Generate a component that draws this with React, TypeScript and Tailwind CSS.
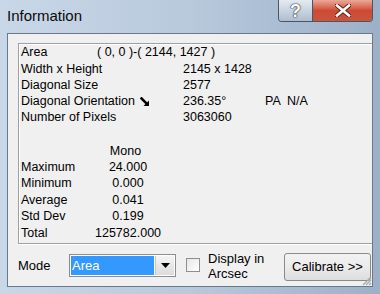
const rows = [
  { label: "Width x Height", value: "2145 x 1428" },
  { label: "Diagonal Size", value: "2577" },
];

const stats = [
  { label: "Maximum", value: "24.000" },
  { label: "Minimum", value: "0.000" },
  { label: "Average", value: "0.041" },
  { label: "Std Dev", value: "0.199" },
  { label: "Total", value: "125782.000" },
];

const Arrow = () => (
  <svg width="10" height="10" viewBox="0 0 10 10" className="ml-[5px] mt-[1px]">
    <path d="M1.5 1.5 L6 6" stroke="#000" strokeWidth="2.6" strokeLinecap="square" />
    <polygon points="9,3.5 9,9 3.5,9" fill="#000" />
  </svg>
);

const App = () => {
  return (
    <div className="w-[380px] h-[294px] overflow-hidden flex flex-col px-[7px] bg-gradient-to-r from-[#c9d8e8] via-[#b8c9dc] to-[#9cb0c8] font-['Liberation_Sans',Arial,sans-serif] text-black">
      {/* title bar */}
      <div className="h-[33px] flex items-start shrink-0">
        <div className="mt-[7px] text-[15px] leading-[18px] text-[#0b0b0b]">Information</div>
        <div className="ml-auto flex h-[22px] border border-t-0 border-[#4a5565] rounded-b-[4px] overflow-hidden">
          <div className="w-[34px] flex items-center justify-center bg-gradient-to-b from-[#e4eaf1] via-[#c9d4e0] to-[#aebdcf] border-r border-[#4a5565]">
            <span className="text-[18px] leading-[18px] font-bold text-white [text-shadow:0_0_1px_#333,0_0_1px_#333,0_0_2px_#555]">?</span>
          </div>
          <div className="w-[59px] flex items-center justify-center bg-gradient-to-b from-[#e9a999] via-[#cf4a32] to-[#c8553d]">
            <svg width="16" height="13" viewBox="0 0 16 13">
              <path d="M2 1.5 L14 11.5 M14 1.5 L2 11.5" stroke="#5a1a12" strokeWidth="4.4" strokeLinecap="square" />
              <path d="M2 1.5 L14 11.5 M14 1.5 L2 11.5" stroke="#fff" strokeWidth="2.6" strokeLinecap="square" />
            </svg>
          </div>
        </div>
      </div>

      {/* client area */}
      <div className="relative w-[366px] h-[254px] shrink-0 border border-[#6b7888] bg-[#f0f0f0] overflow-hidden">
        <div className="ml-[10px] mt-[9px] w-[360px] h-[201px] border-l border-t border-b border-[#a0a0a0] shadow-[inset_1px_1px_0_#fff,0_1px_0_#fff] pl-[2px] text-[12.5px] leading-[16px]">
          <div className="flex h-[17px]">
            <span className="w-[76px]">Area</span>
            <span className="whitespace-pre">( 0, 0 )-( 2144, 1427 )</span>
          </div>
          {rows.map((r) => (
            <div key={r.label} className="flex h-[16px]">
              <span className="w-[162px]">{r.label}</span>
              <span>{r.value}</span>
            </div>
          ))}
          <div className="flex h-[16px]">
            <span className="w-[162px] flex items-center">
              Diagonal Orientation
              <Arrow />
            </span>
            <span className="w-[82px]">236.35°</span>
            <span className="w-[22px]">PA</span>
            <span>N/A</span>
          </div>
          <div className="flex h-[16px]">
            <span className="w-[162px]">Number of Pixels</span>
            <span>3063060</span>
          </div>

          <div className="mt-[18px] flex h-[16px]">
            <span className="w-[74px]"></span>
            <span className="w-[64px] text-center pr-[3px]">Mono</span>
          </div>
          {stats.map((s) => (
            <div key={s.label} className="flex h-[16.4px]">
              <span className="w-[74px]">{s.label}</span>
              <span className="w-[66px] text-center">{s.value}</span>
            </div>
          ))}
        </div>

        {/* bottom controls */}
        <div className="flex items-center h-[42px] pl-[10px] pr-[1px] text-[13px] leading-[15px]">
          <span className="w-[51px]">Mode</span>
          <div className="w-[107px] h-[23px] flex border border-[#8a8f96] bg-white p-[1px]">
            <div className="flex-1 bg-[#3399ff] text-white pl-[1px] flex items-center">Area</div>
            <div className="w-[19px] ml-[1px] flex items-center justify-center bg-gradient-to-b from-[#f4f4f4] to-[#dcdcdc] border-l border-[#c8c8c8]">
              <svg width="9" height="5" viewBox="0 0 9 5">
                <polygon points="0,0 9,0 4.5,5" fill="#000" />
              </svg>
            </div>
          </div>
          <div className="ml-[10px] w-[14px] h-[14px] border border-[#8e8f8f] bg-gradient-to-br from-[#e6e6e6] to-[#ffffff]"></div>
          <div className="ml-[8px] flex flex-col leading-[15px] mt-[1px]">
            <span>Display in</span>
            <span>Arcsec</span>
          </div>
          <div className="ml-auto mt-[3px] w-[87px] h-[28px] flex items-center justify-center border border-[#8a8a8a] rounded-[3px] bg-gradient-to-b from-[#f2f2f2] via-[#ebebeb] to-[#dddddd]">
            Calibrate &gt;&gt;
          </div>
        </div>

        {/* size grip */}
        <svg width="11" height="11" viewBox="0 0 11 11" className="absolute right-0 bottom-0">
          <path d="M10 2 L2 10 M10 5 L5 10 M10 8 L8 10" stroke="#a8a8a8" strokeWidth="1.2" />
        </svg>
      </div>
    </div>
  );
};

export default App;
